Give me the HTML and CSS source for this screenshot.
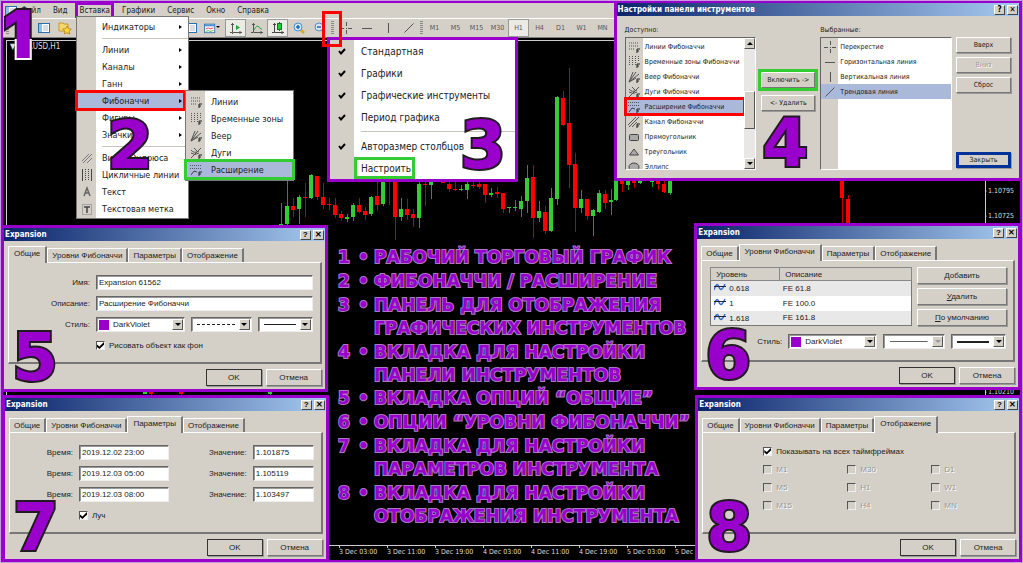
FILE: index.html
```html
<!DOCTYPE html>
<html lang="ru">
  <head>
    <meta charset="UTF-8" />
    <meta name="viewport" content="width=device-width, initial-scale=1.0" />
    <title>Расширение Фибоначчи - инструкция</title>
    <link rel="stylesheet" href="styles.css">
  </head>
  <body>
    <!-- иконки -->
    <svg class="sprite" aria-hidden="true">
      <symbol id="i-lines" viewBox="0 0 12 12"><path d="M1 2h10M1 5h10M1 8h6" stroke="#555" stroke-dasharray="1 1" fill="none"/><path d="M9 12V8h3M9 10h2" stroke="#222" fill="none"/></symbol>
      <symbol id="i-zones" viewBox="0 0 12 12"><path d="M1.500 0v9M4.500 0v9M7.500 0v9M10.500 0v6" stroke="#555" stroke-dasharray="1 1" fill="none"/><path d="M9 12V8h3M9 10h2" stroke="#222" fill="none"/></symbol>
      <symbol id="i-fan" viewBox="0 0 12 12"><path d="M1 11L5 1M1 11L8 1M1 11L11 3M1 11L8 7" stroke="#555" fill="none"/><path d="M9 12V8h3M9 10h2" stroke="#222" fill="none"/></symbol>
      <symbol id="i-arcs" viewBox="0 0 12 12"><path d="M1 11L11 1M1 3q3 4 8 1M1 6q4 3 8 0M4 1l3 3" stroke="#555" fill="none"/><path d="M9 12V8h3M9 10h2" stroke="#222" fill="none"/></symbol>
      <symbol id="i-exp" viewBox="0 0 12 12"><path d="M0 1.500h12M0 4.500h12" stroke="#555" stroke-dasharray="1 1" fill="none"/><path d="M1 11L4 7l3 1" stroke="#444" fill="none"/><path d="M9 12V8h3M9 10h2" stroke="#222" fill="none"/></symbol>
      <symbol id="i-channel" viewBox="0 0 12 12"><path d="M0 9L8 1M1 11L11 1M4 11l5-5" stroke="#555" fill="none"/><path d="M9 12V8h3M9 10h2" stroke="#222" fill="none"/></symbol>
      <symbol id="i-rect" viewBox="0 0 12 12"><rect x="1.500" y="3.500" width="9" height="6" rx="1" fill="#aaa" stroke="#444"/></symbol>
      <symbol id="i-tri" viewBox="0 0 12 12"><path d="M6 3l4.500 6h-9z" fill="#aaa" stroke="#444"/></symbol>
      <symbol id="i-ellipse" viewBox="0 0 12 12"><ellipse cx="6" cy="6" rx="5" ry="4" fill="#aaa" stroke="#444"/></symbol>
      <symbol id="i-fork" viewBox="0 0 12 12"><path d="M1 9l7-7M2 11l9-9M6 11l5-5" stroke="#777" fill="none"/></symbol>
      <symbol id="i-cycle" viewBox="0 0 12 12"><path d="M1.500 0v12M10.500 0v12" stroke="#444"/><path d="M4.500 0v12M7.500 0v12" stroke="#444" stroke-dasharray="1 1"/></symbol>
      <symbol id="i-text" viewBox="0 0 12 12"><path d="M3 10L6 2l3 8M4 7h4" stroke="#666" stroke-width="1.500" fill="none"/></symbol>
      <symbol id="i-label" viewBox="0 0 12 12"><rect x="1.500" y="1.500" width="9" height="10" fill="none" stroke="#777" stroke-dasharray="1 1"/><path d="M3 4h6M6 4v6" stroke="#444" stroke-width="1.500"/></symbol>
      <symbol id="i-cross" viewBox="0 0 12 12"><path d="M0 6.500h4M8 6.500h4M6.500 0v4M6.500 8v4M6 6.500h1" stroke="#555"/></symbol>
      <symbol id="i-h" viewBox="0 0 12 12"><path d="M1 6.500h10" stroke="#555"/></symbol>
      <symbol id="i-v" viewBox="0 0 12 12"><path d="M6.500 1v10" stroke="#555"/></symbol>
      <symbol id="i-diag" viewBox="0 0 12 12"><path d="M1.500 10.500l9-9" stroke="#555"/></symbol>
      <symbol id="i-list" viewBox="0 0 12 12"><rect x=".5" y="1.500" width="11" height="9" fill="#fff" stroke="#2a6fae"/><path d="M1 2h3v8H1z" fill="#8cc0ea"/><path d="M5 4h5M5 6h5M5 8h5" stroke="#bbb"/></symbol>
      <symbol id="i-folder" viewBox="0 0 14 14"><path d="M1 2h4l1 1h4v7H1z" fill="#f5d76e" stroke="#c49a2a"/><path d="M9 5l1.300 2.700 3 .4-2.200 2 .6 3L9 11.700 6.300 13l.6-3-2.200-2 3-.3z" fill="#ffd83a" stroke="#b5831c" stroke-width=".8"/></symbol>
      <symbol id="i-template" viewBox="0 0 14 12"><rect x=".5" y="1.500" width="12" height="10" fill="#fff" stroke="#2a6fae"/><path d="M1 2h11v2H1z" fill="#3f8fd2"/><path d="M2 7l3-1 2 1 4-1" stroke="#d33" fill="none"/><path d="M2 10l3-1 2 1 4-1" stroke="#3a3" fill="none"/></symbol>
      <symbol id="i-bars" viewBox="0 0 12 12"><path d="M2.500 1v9.500H12M0 10.500h2M2.500 12v-1M1 2.500h3M10 9v3" stroke="#555" fill="none"/><path d="M6 3l4 2.500L6 8z" fill="#22aa33"/></symbol>
      <symbol id="i-curve" viewBox="0 0 12 12"><path d="M2.500 1v9.500H12M0 10.500h2M1 2.500h3M10 9v3" stroke="#555" fill="none"/><path d="M3 8q3-6 5-3t3 2" stroke="#22aa33" fill="none"/></symbol>
      <symbol id="i-candles" viewBox="0 0 12 12"><path d="M2.500 1v9.500H12M0 10.500h2M1 2.500h3M10 9v3" stroke="#444" fill="none"/><path d="M7.500 0v9" stroke="#117722"/><rect x="5.500" y="1.500" width="4" height="6" fill="#22cc33" stroke="#117722"/></symbol>
      <symbol id="i-zin" viewBox="0 0 12 12"><path d="M8 8l3 3" stroke="#d9a720" stroke-width="2.500"/><circle cx="5" cy="5" r="4" fill="#cfe6fa" stroke="#4a90d0"/><path d="M3 5h4M5 3v4" stroke="#2468b0" stroke-width="1.500"/></symbol>
      <symbol id="i-zout" viewBox="0 0 12 12"><path d="M8 8l3 3" stroke="#d9a720" stroke-width="2.500"/><circle cx="5" cy="5" r="4" fill="#cfe6fa" stroke="#4a90d0"/><path d="M3 5h4" stroke="#2468b0" stroke-width="1.500"/></symbol>
      <symbol id="i-level" viewBox="0 0 12 8"><path d="M0 7q3-9 5-3t6-3" stroke="#3a6fd0" stroke-width="1.500" fill="none"/><path d="M0 3.500h12" stroke="#223"/></symbol>
      <symbol id="i-check" viewBox="0 0 8 8"><path d="M1 4l2 2.500L7 2" stroke="#000" stroke-width="2" fill="none"/></symbol>
    </svg>

    <div class="screen">
      <main class="terminal">
        <nav class="menubar" aria-label="Главное меню">
          <svg class="icon"><use href="#i-list"/></svg>
          <button>Файл</button>
          <button>Вид</button>
          <button class="active">Вставка</button>
          <button>Графики</button>
          <button>Сервис</button>
          <button>Окно</button>
          <button>Справка</button>
        </nav>
        <div class="toolbar">
          <span class="grip wide"></span>
          <button aria-label="Новый график"><svg class="icon"><use href="#i-list"/></svg></button>
          <button aria-label="Обзор рынка"><svg class="icon"><use href="#i-list"/></svg></button>
          <button aria-label="Избранное"><svg class="icon big"><use href="#i-folder"/></svg></button>
          <button aria-label="Навигатор"><svg class="icon"><use href="#i-list"/></svg></button>
          <button aria-label="Терминал"><svg class="icon"><use href="#i-list"/></svg></button>
          <button aria-label="Тестер"><svg class="icon"><use href="#i-list"/></svg></button>
          <button aria-label="Новый ордер"><svg class="icon"><use href="#i-list"/></svg></button>
          <button aria-label="Индикаторы"><svg class="icon"><use href="#i-list"/></svg></button>
          <button aria-label="Периоды"><svg class="icon"><use href="#i-list"/></svg></button>
          <button aria-label="Шаблоны" class="drop"><svg class="icon"><use href="#i-template"/></svg></button>
          <span class="split"></span>
          <button aria-label="Бары" class="pressed"><svg class="icon"><use href="#i-bars"/></svg></button>
          <button aria-label="Линия"><svg class="icon"><use href="#i-curve"/></svg></button>
          <button aria-label="Свечи" class="pressed"><svg class="icon"><use href="#i-candles"/></svg></button>
          <button aria-label="Увеличить"><svg class="icon"><use href="#i-zin"/></svg></button>
          <button aria-label="Уменьшить"><svg class="icon"><use href="#i-zout"/></svg></button>
          <span class="grip"></span>
          <button aria-label="Перекрестие"><svg class="icon"><use href="#i-cross"/></svg></button>
          <button aria-label="Горизонтальная линия"><svg class="icon"><use href="#i-h"/></svg></button>
          <button aria-label="Вертикальная линия"><svg class="icon"><use href="#i-v"/></svg></button>
          <button aria-label="Трендовая линия"><svg class="icon"><use href="#i-diag"/></svg></button>
          <span class="grip"></span>
          <button>M1</button>
          <button>M5</button>
          <button>M15</button>
          <button>M30</button>
          <button class="pressed">H1</button>
          <button>H4</button>
          <button>D1</button>
          <button>W1</button>
          <button>MN</button>
        </div>
        <section class="chart">
          <div class="plot"><span class="symbol">▼ EURUSD,H1</span></div>
          <div class="times">
            <span>2 Dec 19:00</span><span>3 Dec 03:00</span><span>3 Dec 11:00</span><span>3 Dec 19:00</span><span>4 Dec 03:00</span><span>4 Dec 11:00</span><span>4 Dec 19:00</span><span>5 Dec 03:00</span><span>5 Dec 11:00</span>
          </div>
        </section>
      </main>

      <svg class="candles" id="candles" aria-hidden="true"></svg>
      <div class="prices"></div>
      <span class="price price-a">1.10795</span>
      <span class="price price-b">1.10725</span>
      <span class="price price-c">1.10210</span>

      <span class="step step-first">1</span>

      <!-- меню "Вставка" -->
      <ul class="menu menu-insert">
        <li><i></i><button>Индикаторы</button><b></b></li>
        <li class="line"></li>
        <li><i></i><button>Линии</button><b></b></li>
        <li><i></i><button>Каналы</button><b></b></li>
        <li><i></i><button>Ганн</button><b></b></li>
        <li class="selected mark-red"><i></i><button>Фибоначчи</button><b></b></li>
        <li><i></i><button>Фигуры</button><b></b></li>
        <li><i></i><button>Значки</button><b></b></li>
        <li class="line"></li>
        <li><i><svg class="icon"><use href="#i-fork"/></svg></i><button>Вилка Эндрюса</button></li>
        <li><i><svg class="icon"><use href="#i-cycle"/></svg></i><button>Цикличные линии</button></li>
        <li><i><svg class="icon"><use href="#i-text"/></svg></i><button>Текст</button></li>
        <li><i><svg class="icon"><use href="#i-label"/></svg></i><button>Текстовая метка</button></li>
      </ul>
      <span class="step step-insert">2</span>
      <ul class="menu menu-fibo">
        <li><i><svg class="icon"><use href="#i-lines"/></svg></i><button>Линии</button></li>
        <li><i><svg class="icon"><use href="#i-zones"/></svg></i><button>Временные зоны</button></li>
        <li><i><svg class="icon"><use href="#i-fan"/></svg></i><button>Веер</button></li>
        <li><i><svg class="icon"><use href="#i-arcs"/></svg></i><button>Дуги</button></li>
        <li class="selected mark-green"><i><svg class="icon"><use href="#i-exp"/></svg></i><button>Расширение</button></li>
      </ul>

      <!-- контекстное меню панели -->
      <ul class="menu menu-panel">
        <li><i><svg class="icon small"><use href="#i-check"/></svg></i><button>Стандартная</button></li>
        <li><i><svg class="icon small"><use href="#i-check"/></svg></i><button>Графики</button></li>
        <li><i><svg class="icon small"><use href="#i-check"/></svg></i><button>Графические инструменты</button></li>
        <li><i><svg class="icon small"><use href="#i-check"/></svg></i><button>Период графика</button></li>
        <li class="line"></li>
        <li><i><svg class="icon small"><use href="#i-check"/></svg></i><button>Авторазмер столбцов</button></li>
        <li><i></i><button class="boxed">Настроить</button></li>
      </ul>
      <span class="grip-mark"></span>
      <span class="step step-panel">3</span>

      <!-- настройки панели инструментов -->
      <section class="window win-tools">
        <header><h2>Настройки панели инструментов</h2><button aria-label="Справка">?</button><button aria-label="Закрыть окно">✕</button></header>
        <div class="tools">
          <div>
            <h3>Доступно:</h3>
            <div class="listbox">
              <ul>
                <li><i><svg class="icon"><use href="#i-lines"/></svg></i>Линии Фибоначчи</li>
                <li><i><svg class="icon"><use href="#i-zones"/></svg></i>Временные зоны Фибоначчи</li>
                <li><i><svg class="icon"><use href="#i-fan"/></svg></i>Веер Фибоначчи</li>
                <li><i><svg class="icon"><use href="#i-arcs"/></svg></i>Дуги Фибоначчи</li>
                <li class="selected mark-red"><i><svg class="icon"><use href="#i-exp"/></svg></i>Расширение Фибоначчи</li>
                <li><i><svg class="icon"><use href="#i-channel"/></svg></i>Канал Фибоначчи</li>
                <li><i><svg class="icon"><use href="#i-rect"/></svg></i>Прямоугольник</li>
                <li><i><svg class="icon"><use href="#i-tri"/></svg></i>Треугольник</li>
                <li><i><svg class="icon"><use href="#i-ellipse"/></svg></i>Эллипс</li>
              </ul>
              <div class="scroll"><span class="up"></span><span class="thumb"></span><span class="down"></span></div>
            </div>
          </div>
          <div class="transfer">
            <button class="btn mark-green">Включить -&gt;</button>
            <button class="btn">&lt;- Удалить</button>
            <span class="step">4</span>
          </div>
          <div>
            <h3>Выбранные:</h3>
            <div class="listbox">
              <ul>
                <li><i><svg class="icon"><use href="#i-cross"/></svg></i>Перекрестие</li>
                <li><i><svg class="icon"><use href="#i-h"/></svg></i>Горизонтальная линия</li>
                <li><i><svg class="icon"><use href="#i-v"/></svg></i>Вертикальная линия</li>
                <li class="selected"><i><svg class="icon"><use href="#i-diag"/></svg></i>Трендовая линия</li>
              </ul>
            </div>
          </div>
          <div class="side">
            <button class="btn">Вверх</button>
            <button class="btn" disabled>Вниз</button>
            <button class="btn">Сброс</button>
            <button class="btn close">Закрыть</button>
          </div>
        </div>
      </section>

      <!-- Общие -->
      <section class="window win-common">
        <header><h2>Expansion</h2><button aria-label="Справка">?</button><button aria-label="Закрыть окно">✕</button></header>
        <div class="tabs"><button class="on">Общие</button><button>Уровни Фибоначчи</button><button>Параметры</button><button>Отображение</button></div>
        <div class="page form-common">
          <label for="name">Имя:</label>
          <input id="name" type="text" value="Expansion 61562">
          <label for="descr">Описание:</label>
          <input id="descr" type="text" value="Расширение Фибоначчи">
          <label for="color">Стиль:</label>
          <div class="styles">
            <span class="combo color"><span class="swatch"></span><select id="color"><option>DarkViolet</option></select><span class="arrow"></span></span>
            <span class="combo"><select class="dash" aria-label="Тип линии"><option></option></select><span class="arrow"></span></span>
            <span class="combo"><select class="solid" aria-label="Толщина"><option></option></select><span class="arrow"></span></span>
          </div>
          <label class="check second"><input type="checkbox" checked>Рисовать объект как фон</label>
        </div>
        <footer><button class="btn default">OK</button><button class="btn">Отмена</button></footer>
        <span class="step">5</span>
      </section>

      <!-- Параметры -->
      <section class="window win-params">
        <header><h2>Expansion</h2><button aria-label="Справка">?</button><button aria-label="Закрыть окно">✕</button></header>
        <div class="tabs"><button>Общие</button><button>Уровни Фибоначчи</button><button class="on">Параметры</button><button>Отображение</button></div>
        <div class="page form-params">
          <label for="t1">Время:</label><input id="t1" type="text" value="2019.12.02 23:00">
          <label for="v1">Значение:</label><input id="v1" type="text" value="1.101875">
          <label for="t2">Время:</label><input id="t2" type="text" value="2019.12.03 05:00">
          <label for="v2">Значение:</label><input id="v2" type="text" value="1.105119">
          <label for="t3">Время:</label><input id="t3" type="text" value="2019.12.03 08:00">
          <label for="v3">Значение:</label><input id="v3" type="text" value="1.103497">
          <label class="check second"><input type="checkbox" checked>Луч</label>
        </div>
        <footer><button class="btn default">OK</button><button class="btn">Отмена</button></footer>
        <span class="step">7</span>
      </section>

      <!-- Уровни Фибоначчи -->
      <section class="window win-levels">
        <header><h2>Expansion</h2><button aria-label="Справка">?</button><button aria-label="Закрыть окно">✕</button></header>
        <div class="tabs"><button>Общие</button><button class="on">Уровни Фибоначчи</button><button>Параметры</button><button>Отображение</button></div>
        <div class="page">
          <div class="levels">
            <table>
              <thead><tr><th>Уровень</th><th>Описание</th></tr></thead>
              <tbody>
                <tr><td><svg class="wave"><use href="#i-level"/></svg>0.618</td><td>FE 61.8</td></tr>
                <tr><td><svg class="wave"><use href="#i-level"/></svg>1</td><td>FE 100.0</td></tr>
                <tr><td><svg class="wave"><use href="#i-level"/></svg>1.618</td><td>FE 161.8</td></tr>
              </tbody>
            </table>
            <div class="level-buttons">
              <button class="btn"><u>Д</u>обавить</button>
              <button class="btn"><u>У</u>далить</button>
              <button class="btn"><u>П</u>о умолчанию</button>
            </div>
          </div>
          <div class="level-style">
            <label for="lcolor">Стиль:</label>
            <div class="styles">
              <span class="combo color"><span class="swatch"></span><select id="lcolor"><option>DarkViolet</option></select><span class="arrow"></span></span>
              <span class="combo"><select class="solid" aria-label="Тип линии" disabled><option></option></select><span class="arrow off"></span></span>
              <span class="combo"><select class="solid bold" aria-label="Толщина"><option></option></select><span class="arrow"></span></span>
            </div>
          </div>
        </div>
        <footer><button class="btn default">OK</button><button class="btn">Отмена</button></footer>
        <span class="step">6</span>
      </section>

      <!-- Отображение -->
      <section class="window win-display">
        <header><h2>Expansion</h2><button aria-label="Справка">?</button><button aria-label="Закрыть окно">✕</button></header>
        <div class="tabs"><button>Общие</button><button>Уровни Фибоначчи</button><button>Параметры</button><button class="on">Отображение</button></div>
        <div class="page form-display">
          <label class="check all"><input type="checkbox" checked>Показывать на всех таймфреймах</label>
          <label class="check"><input type="checkbox" disabled>M1</label>
          <label class="check"><input type="checkbox" disabled>M30</label>
          <label class="check"><input type="checkbox" disabled>D1</label>
          <label class="check"><input type="checkbox" disabled>M5</label>
          <label class="check"><input type="checkbox" disabled>H1</label>
          <label class="check"><input type="checkbox" disabled>W1</label>
          <label class="check"><input type="checkbox" disabled>M15</label>
          <label class="check"><input type="checkbox" disabled>H4</label>
          <label class="check"><input type="checkbox" disabled>MN</label>
        </div>
        <footer><button class="btn default">OK</button><button class="btn">Отмена</button></footer>
        <span class="step">8</span>
      </section>

      <ul class="legend">
        <li><span>1</span><span>•</span><p>РАБОЧИЙ ТОРГОВЫЙ ГРАФИК</p></li>
        <li><span>2</span><span>•</span><p>ФИБОНАЧЧИ / РАСШИРЕНИЕ</p></li>
        <li><span>3</span><span>•</span><p>ПАНЕЛЬ ДЛЯ ОТОБРАЖЕНИЯ<br>ГРАФИЧЕСКИХ ИНСТРУМЕНТОВ</p></li>
        <li><span>4</span><span>•</span><p>ВКЛАДКА ДЛЯ НАСТРОЙКИ<br>ПАНЕЛИ ИНСТРУМЕНТОВ</p></li>
        <li><span>5</span><span>•</span><p>ВКЛАДКА ОПЦИЙ “ОБЩИЕ”</p></li>
        <li><span>6</span><span>•</span><p>ОПЦИИ “УРОВНИ ФИБОНАЧЧИ”</p></li>
        <li><span>7</span><span>•</span><p>ВКЛАДКА ДЛЯ НАСТРОЙКИ<br>ПАРАМЕТРОВ ИНСТРУМЕНТА</p></li>
        <li><span>8</span><span>•</span><p>ВКЛАДКА ДЛЯ НАСТРОЙКИ<br>ОТОБРАЖЕНИЯ ИНСТРУМЕНТА</p></li>
      </ul>
    </div>
    <script src="script.js"></script>
  </body>
</html>
```

FILE: styles.css
```css
* {
  box-sizing: border-box;
}
body {
  margin: 0;
  background-color: #000;
  font-family: "DejaVu Sans Condensed", "DejaVu Sans", sans-serif;
  font-size: 8px;
  color: #222;
}
button,
input,
select {
  font: inherit;
  color: inherit;
  margin: 0;
  padding: 0;
  border: none;
  background: none;
}
ul {
  list-style: none;
  margin: 0;
  padding: 0;
}
h2,
h3,
p {
  margin: 0;
}
i {
  font-style: normal;
}
.sprite {
  display: none;
}
.icon {
  width: 12px;
  height: 12px;
  flex: none;
}
.icon.big {
  width: 14px;
  height: 14px;
}
.icon.small {
  width: 8px;
  height: 8px;
}

/* терминал */
.screen {
  position: relative;
  min-height: 100vh;
  display: flex;
  border: 1px solid #c79be0;
  overflow: hidden;
}
.terminal {
  flex: 1;
  display: flex;
  flex-direction: column;
  border: 2px solid #9900cc;
}
.menubar {
  display: flex;
  align-items: center;
  gap: 12px;
  height: 15px;
  padding-left: 2px;
  background-color: #d4d0c8;
}
.menubar .icon {
  margin-right: -8px;
}
.menubar .active {
  outline: 3px solid #9900cc;
  outline-offset: 1px;
}
.toolbar {
  display: flex;
  align-items: stretch;
  height: 20px;
  background-color: #d4d0c8;
  border-top: 1px solid #fff;
  border-bottom: 1px solid #808080;
}
.toolbar button {
  display: flex;
  align-items: center;
  justify-content: center;
  width: 21px;
  font-size: 7px;
  color: #555;
}
.toolbar .pressed {
  background-color: #eceae5;
  border: 1px solid #999;
}
.toolbar .drop::after {
  content: "";
  border: 2px solid transparent;
  border-top-color: #000;
}
.grip {
  width: 5px;
  background: repeating-linear-gradient(#888 0 1px, #d4d0c8 1px 2px) center / 3px 14px no-repeat;
}
.grip.wide {
  width: 9px;
}
.split {
  width: 3px;
}
.grip-mark {
  position: absolute;
  left: 321px;
  top: 10px;
  width: 20px;
  height: 36px;
  border: 3px solid #ff0000;
}
.chart {
  flex: 1;
  display: flex;
  flex-direction: column;
  margin: 2px 0 0 3px;
  border-top: 1px solid #ccc;
  border-left: 1px solid #ccc;
}
.plot {
  flex: 1;
  color: #ddd;
  padding: 1px 3px;
}
.times {
  display: flex;
  height: 15px;
  margin-right: 36px;
  padding-left: 284px;
  border-top: 1px solid #ccc;
  color: #ddd;
  font-size: 7px;
  overflow: hidden;
}
.times span {
  flex: none;
  width: 48px;
  padding-top: 2px;
  white-space: nowrap;
}
.times span::before {
  content: "";
  display: block;
  width: 1px;
  height: 2px;
  margin-top: -2px;
  background-color: #ccc;
}
.candles {
  position: absolute;
  left: -1px;
  top: -1px;
  width: 100%;
  height: 100%;
}
.prices {
  position: absolute;
  right: 36px;
  top: 40px;
  bottom: 17px;
  border-left: 1px solid #ccc;
}
.price {
  position: absolute;
  right: 8px;
  color: #ddd;
  font-size: 7px;
}
.price::before {
  content: "-";
  margin-right: 1px;
}
.price-a {
  top: 186px;
}
.price-b {
  top: 211px;
}
.price-c {
  top: 387px;
}

/* меню */
.menu {
  position: absolute;
  background: linear-gradient(to right, #d4d0c8 19px, #fff 19px);
  border: 1px solid #777;
  font-size: 9px;
}
.menu li {
  display: flex;
  align-items: center;
  height: 17px;
}
.menu i {
  width: 19px;
  display: flex;
  justify-content: center;
  flex: none;
}
.menu button {
  flex: 1;
  padding-left: 6px;
  text-align: left;
  white-space: nowrap;
}
.menu b {
  border: 2px solid transparent;
  border-left: 3px solid #000;
  border-right-width: 0;
  margin-right: 6px;
}
.menu .line {
  height: 6px;
  margin-left: 25px;
  background: linear-gradient(#c8c4bc, #c8c4bc) center / 100% 1px no-repeat;
}
.selected {
  background-color: #aab8da;
}
.mark-red {
  outline: 3px solid #ff0000;
  outline-offset: -1px;
}
.mark-green {
  outline: 3px solid #33cc33;
  outline-offset: 0;
}
.menu .mark-green {
  outline-offset: -1px;
}
.menu-insert {
  left: 75px;
  top: 15px;
  width: 113px;
  padding: 1px 0;
}
.menu-insert .mark-red {
  margin-right: 4px;
}
.menu-insert .mark-red b {
  margin-right: 2px;
}
.menu-fibo {
  left: 184px;
  top: 89px;
  width: 109px;
  padding: 2px 0;
}
.menu-panel {
  left: 326px;
  top: 36px;
  width: 191px;
  border: 3px solid #9900cc;
  background: linear-gradient(to right, #d4d0c8 24px, #fff 24px);
  font-size: 10px;
}
.menu-panel li {
  height: 22px;
}
.menu-panel i {
  width: 24px;
}
.menu-panel button {
  padding-left: 7px;
}
.menu-panel .line {
  height: 7px;
  margin-left: 31px;
}
.menu-panel .boxed {
  flex: none;
  height: 22px;
  padding: 0 1px 0 4px;
  border: 3px solid #33cc33;
}

/* номера */
.step {
  position: absolute;
  font: bold 66px/52px "DejaVu Sans", sans-serif;
  color: #9900cc;
  -webkit-text-stroke: 4px #221a22;
  paint-order: stroke fill;
  pointer-events: none;
}
.window > .step {
  left: 8px;
  bottom: 5px;
}
.step-first,
.step-first::after {
  font-family: Inter, sans-serif;
  font-weight: 900;
}
.step-first {
  left: 2px;
  top: 7px;
}
.step-first::after {
  content: "1";
  position: absolute;
  left: 0;
  top: 0;
  -webkit-text-stroke-color: #fff;
  clip-path: inset(31px -5px -5px -5px);
}
.step-insert {
  left: 106px;
  top: 119px;
}
.step-panel {
  left: 459px;
  top: 119px;
}

/* окна */
.window {
  position: absolute;
  width: 32%;
  border: 3px solid #9900cc;
  background-color: #d4d0c8;
  font-family: "Liberation Sans", Arial, sans-serif;
}
.window header {
  display: flex;
  align-items: center;
  height: 13px;
  padding: 0 1px;
  background: linear-gradient(to right, #0a246a, #a6caf0);
  color: #fff;
}
.window h2 {
  flex: 1;
  font: bold 8px "DejaVu Sans Condensed", "DejaVu Sans", sans-serif;
}
.window header button {
  width: 11px;
  height: 10px;
  margin-left: 2px;
  background-color: #d4d0c8;
  border: 1px solid;
  border-color: #fff #444 #444 #fff;
  color: #000;
  font-size: 8px;
  font-weight: bold;
  line-height: 8px;
}
.win-common {
  left: 0;
  top: 224px;
}
.win-params {
  left: 1px;
  bottom: 0;
}
.win-levels {
  right: 1px;
  top: 222px;
}
.win-display {
  right: 0;
  bottom: 0;
}
.tabs {
  display: flex;
  align-items: flex-end;
  height: 21px;
  padding: 0 4px;
}
.tabs button {
  height: 14px;
  padding: 0 4px;
  border-top: 1px solid #fff;
  border-left: 1px solid #fff;
  border-right: 2px solid #777;
  white-space: nowrap;
}
.tabs .on {
  height: 17px;
  margin-bottom: -1px;
  padding: 0 5px 3px;
  background-color: #d4d0c8;
  position: relative;
}
.page {
  margin: 0 3px 0 4px;
  min-height: 102px;
  border: 1px solid;
  border-color: #fff #777 #777 #fff;
  border-right-width: 2px;
  border-bottom-width: 2px;
}
.window footer {
  display: flex;
  justify-content: flex-end;
  gap: 4px;
  padding: 5px 3px 3px;
}
.window footer .btn {
  width: 56px;
  height: 17px;
}
.btn {
  background-color: #d4d0c8;
  border: 1px solid;
  border-color: #fff #777 #777 #fff;
  box-shadow: 1px 1px 0 #999;
  white-space: nowrap;
}
.btn.default {
  border-color: #333;
}
.btn:disabled {
  color: #999;
  text-shadow: 1px 1px 0 #fff;
}
.page label {
  text-align: right;
  white-space: nowrap;
}
input[type="text"],
.combo {
  height: 15px;
  min-width: 0;
  padding: 0 2px;
  background-color: #fff;
  border: 1px solid;
  border-color: #666 #eee #eee #666;
  box-shadow: inset 1px 1px 0 #999;
}
.page .check {
  display: flex;
  align-items: center;
  gap: 4px;
  text-align: left;
}
input[type="checkbox"] {
  appearance: none;
  width: 9px;
  height: 9px;
  background-color: #fff;
  border: 1px solid;
  border-color: #555 #eee #eee #555;
}
input[type="checkbox"]:checked::before {
  content: "";
  display: block;
  height: 7px;
  background-color: #000;
  clip-path: polygon(0 35%, 35% 65%, 100% 0, 100% 40%, 35% 100%, 0 70%);
}
input[type="checkbox"]:disabled {
  background-color: #d4d0c8;
}
.check:has(:disabled) {
  color: #999;
  text-shadow: 1px 1px 0 #fff;
}
.form-common {
  display: grid;
  grid-template-columns: 81px 1fr;
  grid-auto-rows: 15px;
  align-items: center;
  gap: 6px;
  padding: 12px 7px 0 0;
}
.form-common .second,
.form-params .second {
  grid-column: 2;
}
.form-params {
  display: grid;
  grid-template-columns: 63px 1fr 72px 61px;
  grid-auto-rows: 15px;
  align-items: center;
  gap: 6px;
  padding: 12px 7px 0 0;
}
.form-display {
  display: grid;
  grid-template-columns: repeat(3, 84px);
  grid-auto-rows: 12px;
  gap: 6px 0;
  padding: 12px 0 0 60px;
}
.form-display .all {
  grid-column: 1 / -1;
}
.styles {
  display: grid;
  grid-template-columns: 89px 1fr 55px;
  gap: 6px;
}
.combo {
  display: flex;
  align-items: center;
  padding: 1px;
}
.combo select {
  flex: 1;
  min-width: 0;
  height: 11px;
  appearance: none;
}
.color select {
  padding-left: 4px;
}
.swatch {
  width: 10px;
  height: 10px;
  margin-left: 1px;
  background-color: #9900cc;
}
.arrow {
  width: 11px;
  height: 11px;
  background-color: #d4d0c8;
  border: 1px solid;
  border-color: #fff #555 #555 #fff;
}
.arrow::before {
  content: "";
  display: block;
  width: 0;
  margin: 3px auto 0;
  border: 3px solid transparent;
  border-top-color: #000;
  border-bottom-width: 0;
}
.arrow.off::before {
  border-top-color: #999;
}
.combo .dash {
  background: repeating-linear-gradient(to right, #222 0 3px, #fff 3px 5px) center / 38px 1px no-repeat;
}
.combo .solid {
  background: linear-gradient(#222, #222) center / 80% 1px no-repeat;
}
.combo .bold {
  background-size: 80% 2px;
}

/* уровни */
.levels {
  display: flex;
  gap: 5px;
  padding: 6px 6px 0 8px;
}
.levels table {
  flex: 1;
  border-collapse: collapse;
  border: 1px solid #777;
  background-color: #fff;
}
.levels th {
  height: 13px;
  padding: 0 5px;
  background-color: #d4d0c8;
  border: 1px solid #888;
  font-weight: normal;
  text-align: left;
}
.levels td {
  height: 15px;
  padding: 0 4px 0 3px;
}
.levels th:first-child {
  width: 69px;
}
.levels tr:nth-child(odd) td {
  background-color: #e8e8e8;
}
.wave {
  width: 12px;
  height: 8px;
  margin-right: 3px;
}
.level-buttons {
  display: flex;
  flex-direction: column;
  gap: 4px;
  width: 90px;
}
.level-buttons .btn {
  height: 17px;
}
.level-style {
  display: grid;
  grid-template-columns: 80px 1fr;
  align-items: center;
  gap: 6px;
  padding: 8px 7px 0 0;
}

/* панель инструментов */
.win-tools {
  right: 0;
  top: -1px;
  width: 40%;
  font-family: "DejaVu Sans Condensed", "DejaVu Sans", sans-serif;
  font-size: 7px;
}
.tools {
  display: grid;
  grid-template-columns: 1fr 64px 1fr 59px;
  padding: 10px 8px 8px;
}
.tools h3 {
  height: 11px;
  font-size: 7px;
  font-weight: normal;
}
.listbox {
  display: flex;
  height: 133px;
  border: 1px solid;
  border-color: #666 #fff #fff #666;
  background: linear-gradient(to right, #d4d0c8 17px, #fff 17px);
}
.listbox ul {
  flex: 1;
  height: 131px;
  padding-top: 1px;
  overflow: hidden;
}
.listbox:has(.scroll) ul {
  overflow: clip;
  overflow-clip-margin: 3px;
  height: 128px;
}
.listbox li {
  display: flex;
  align-items: center;
  height: 15px;
  white-space: nowrap;
}
.listbox i {
  display: flex;
  justify-content: center;
  width: 17px;
  margin-right: 2px;
}
.scroll {
  display: flex;
  flex-direction: column;
  width: 11px;
  background-color: #e9e7e3;
}
.scroll .up,
.scroll .down,
.scroll .thumb {
  height: 11px;
  background-color: #d4d0c8;
  border: 1px solid;
  border-color: #fff #555 #555 #fff;
}
.scroll .thumb {
  height: 38px;
  margin-top: 42px;
}
.scroll .down {
  margin-top: auto;
}
.scroll .up::before,
.scroll .down::before {
  content: "";
  display: block;
  width: 0;
  margin: 3px auto 0;
  border: 3px solid transparent;
  border-top-width: 0;
  border-bottom-color: #000;
}
.scroll .down::before {
  border-width: 3px 3px 0;
  border-top-color: #000;
}
.tools .btn {
  height: 16px;
}
.transfer {
  display: flex;
  flex-direction: column;
  gap: 7px;
  padding: 46px 5px 0;
}
.transfer .step {
  position: static;
  margin-left: 1px;
}
.side {
  display: flex;
  flex-direction: column;
  gap: 4px;
  padding: 11px 0 2px 4px;
}
.side .close {
  margin-top: auto;
  border: 3px solid #003399;
}

/* легенда */
.legend {
  position: absolute;
  left: 33%;
  top: 245px;
  bottom: 34px;
  display: flex;
  flex-direction: column;
  justify-content: space-between;
  font: bold 17px/23px "DejaVu Sans", sans-serif;
  color: #9900cc;
  -webkit-text-stroke: 2px #ab78c4;
  paint-order: stroke fill;
  white-space: nowrap;
}
.legend li {
  display: grid;
  grid-template-columns: 20px 16px 1fr;
}
```

FILE: script.js
```js
// x, цвет, тело сверху, тело снизу, тень сверху, тень снизу
const candles = [
  [281, "g", 224, 226, 203, 226], [287, "g", 206, 224, 180, 226],
  [293, "r", 206, 210, 198, 217], [299, "g", 197, 209, 195, 224],
  [305, "r", 197, 198, 183, 217], [311, "g", 175, 198, 174, 199],
  [317, "r", 176, 197, 176, 200], [323, "r", 197, 205, 183, 209],
  [329, "r", 204, 205, 198, 210], [335, "r", 205, 215, 198, 218],
  [341, "r", 214, 218, 211, 221], [347, "g", 217, 219, 214, 222],
  [353, "g", 205, 217, 203, 221], [359, "r", 205, 212, 198, 213],
  [365, "r", 211, 215, 207, 220], [371, "g", 197, 214, 196, 216],
  [377, "r", 196, 205, 181, 211], [383, "g", 160, 204, 160, 206],
  [389, "r", 175, 180, 170, 205], [395, "r", 175, 217, 170, 240],
  [401, "g", 209, 217, 198, 221], [407, "r", 209, 215, 199, 220],
  [413, "r", 214, 218, 209, 227], [419, "g", 184, 218, 170, 228],
  [425, "r", 184, 185, 170, 206], [431, "g", 181, 185, 170, 199],
  [443, "r", 180, 183, 170, 183], [449, "r", 184, 189, 175, 192],
  [455, "r", 189, 190, 175, 191], [461, "g", 189, 190, 185, 191],
  [467, "g", 184, 190, 175, 199], [473, "r", 185, 186, 175, 188],
  [479, "r", 184, 187, 182, 189], [485, "r", 184, 195, 184, 203],
  [491, "g", 193, 195, 188, 197], [497, "r", 192, 194, 187, 198],
  [503, "r", 193, 209, 193, 213], [509, "g", 207, 208, 207, 213],
  [515, "g", 207, 208, 200, 211], [521, "g", 201, 209, 196, 217],
  [527, "g", 178, 201, 165, 213], [533, "r", 177, 218, 165, 238],
  [539, "g", 211, 218, 201, 222], [545, "r", 212, 231, 206, 234],
  [551, "g", 198, 231, 188, 232], [557, "g", 97, 199, 96, 205],
  [563, "r", 98, 125, 91, 126], [569, "r", 123, 165, 68, 188],
  [575, "r", 164, 208, 153, 232], [581, "g", 199, 208, 190, 213],
  [587, "r", 199, 216, 199, 220], [593, "g", 210, 216, 209, 236],
  [599, "g", 193, 212, 190, 213], [605, "r", 194, 203, 190, 209],
  [611, "g", 200, 202, 189, 215], [616, "g", 181, 200, 175, 201],
  [622, "r", 181, 184, 175, 192], [628, "g", 181, 185, 175, 190],
  [634, "r", 181, 183, 175, 188], [640, "g", 181, 183, 175, 184],
  [652, "g", 180, 182, 175, 187], [658, "r", 181, 184, 175, 190],
  [664, "r", 184, 192, 175, 193], [670, "g", 175, 193, 175, 195],
  [842, "r", 175, 198, 175, 223], [848, "r", 199, 223, 195, 224],
  [145, "g", 391, 394, 391, 394], [151, "r", 391, 394, 391, 395],
  [181, "r", 391, 394, 391, 395], [270, "g", 391, 394, 391, 395],
];

const svg = document.getElementById("candles");
const colors = { g: "#33cc33", r: "#ff0000" };

function addRect(x, y, w, h, fill) {
  const rect = document.createElementNS("http://www.w3.org/2000/svg", "rect");
  rect.setAttribute("x", x);
  rect.setAttribute("y", y);
  rect.setAttribute("width", w);
  rect.setAttribute("height", h);
  rect.setAttribute("fill", fill);
  svg.appendChild(rect);
}

candles.forEach(([x, c, top, bottom, high, low]) => {
  addRect(x, high, 1, low - high, c === "g" ? "#229922" : "#bb0000");
  addRect(x - 2, top, 4, bottom - top, colors[c]);
});
```
